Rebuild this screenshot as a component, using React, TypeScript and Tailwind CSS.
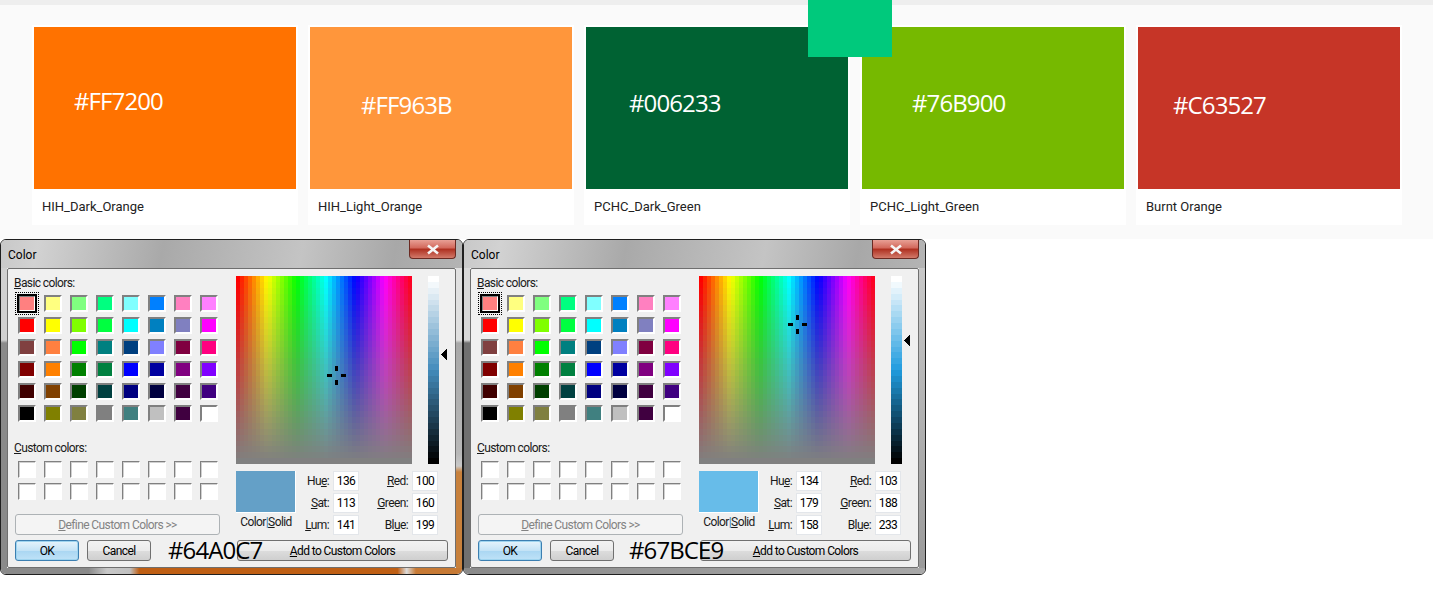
const colors = [
  { hex: '#FF7200', name: 'HIH_Dark_Orange', bg: 'bg-[#FF7200]', pad: 'pl-[40px] pt-[58px]' },
  { hex: '#FF963B', name: 'HIH_Light_Orange', bg: 'bg-[#FF963B]', pad: 'pl-[51px] pt-[62px]' },
  { hex: '#006233', name: 'PCHC_Dark_Green', bg: 'bg-[#006233]', pad: 'pl-[43px] pt-[60px]' },
  { hex: '#76B900', name: 'PCHC_Light_Green', bg: 'bg-[#76B900]', pad: 'pl-[50px] pt-[60px]' },
  { hex: '#C63527', name: 'Burnt Orange', bg: 'bg-[#C63527]', pad: 'pl-[35px] pt-[62px]' },
];

const basicColors = [
  '#FF8080', '#FFFF80', '#80FF80', '#00FF80', '#80FFFF', '#0080FF', '#FF80C0', '#FF80FF',
  '#FF0000', '#FFFF00', '#80FF00', '#00FF40', '#00FFFF', '#0080C0', '#8080C0', '#FF00FF',
  '#804040', '#FF8040', '#00FF00', '#008080', '#004080', '#8080FF', '#800040', '#FF0080',
  '#800000', '#FF8000', '#008000', '#008040', '#0000FF', '#0000A0', '#800080', '#8000FF',
  '#400000', '#804000', '#004000', '#004040', '#000080', '#000040', '#400040', '#400080',
  '#000000', '#808000', '#808040', '#808080', '#408080', '#C0C0C0', '#400040', '#FFFFFF',
];

const btn = 'h-[21px] rounded-[3px] border flex items-center justify-center text-black';
const btnGrey = 'border-[#707070] bg-[linear-gradient(#f2f2f2,#ebebeb_50%,#dddddd_50%,#cfcfcf)]';

function Spectrum({ hue, sat }: { hue: number; sat: number }) {
  const cols = Array.from({ length: 44 }, (_, i) => i);
  const rows = Array.from({ length: 32 }, (_, i) => i);
  const cx = Math.round((hue / 240) * 176);
  const cy = Math.round((1 - sat / 240) * 188);
  return (
    <svg width="176" height="188" viewBox="0 0 176 188" shapeRendering="crispEdges" className="block">
      {cols.map((c) =>
        rows.map((r) => (
          <rect
            key={`${c}-${r}`}
            x={c * 4}
            y={r * 5.875}
            width="4"
            height="6"
            fill={`hsl(${(c / 44) * 360} ${100 - (r / 31) * 100}% 50%)`}
          />
        )),
      )}
      <rect x={cx - 1} y={cy - 9} width="3" height="5" fill="#000" />
      <rect x={cx - 1} y={cy + 5} width="3" height="5" fill="#000" />
      <rect x={cx - 9} y={cy - 1} width="5" height="3" fill="#000" />
      <rect x={cx + 5} y={cy - 1} width="5" height="3" fill="#000" />
    </svg>
  );
}

function LumBar({ hue, sat, lum }: { hue: number; sat: number; lum: number }) {
  const rows = Array.from({ length: 32 }, (_, i) => i);
  return (
    <div className="relative w-[20px] h-[188px]">
      <svg width="11" height="188" viewBox="0 0 11 188" shapeRendering="crispEdges" className="block">
        {rows.map((r) => (
          <rect
            key={r}
            x="0"
            y={r * 5.875}
            width="11"
            height="6"
            fill={`hsl(${(hue / 240) * 360} ${(sat / 240) * 100}% ${100 - (r / 31) * 100}%)`}
          />
        ))}
      </svg>
      <svg
        width="7"
        height="11"
        viewBox="0 0 7 11"
        shapeRendering="crispEdges"
        className="absolute left-[13px]"
        style={{ top: Math.round((1 - lum / 240) * 188) - 5 }}
      >
        <path d="M0 5.5 6 0v11z" fill="#000" />
      </svg>
    </div>
  );
}

function ValueRow({ label, value }: { label: React.ReactNode; value: number }) {
  return (
    <div className="flex items-center h-[20px] justify-end">
      <span className="mr-[4px] whitespace-nowrap">{label}</span>
      <span className="w-[26px] h-[20px] bg-white border border-[#e3e6ea] flex items-center justify-center text-black">
        {value}
      </span>
    </div>
  );
}

type DialogProps = {
  hex: string;
  hexClass: string;
  hue: number;
  sat: number;
  lum: number;
  red: number;
  green: number;
  blue: number;
  swatch: string;
  title: string;
  left: string;
  right: string;
  bottom: string;
};

function ColorDialog(p: DialogProps) {
  return (
    <div className="relative w-[463px] h-[336px] flex flex-col border border-[#1f1f1f] rounded-[6px] overflow-hidden text-[12px] leading-4 text-[#1a1a1a] font-['Roboto',sans-serif] tracking-[-0.6px]">
      <div className={`h-[28px] shrink-0 flex justify-between pl-[7px] pr-[6px] ${p.title}`}>
        <span className="pt-[7px] text-black tracking-normal">Color</span>
        <div className="w-[47px] h-[19px] rounded-b-[4px] border border-t-0 border-[#6b2a22] bg-[linear-gradient(#e8a095,#d2675a_45%,#ae2f1f_50%,#d27a6a)] flex items-center justify-center">
          <svg width="14" height="11" viewBox="0 0 14 11">
            <path d="M2 1.5 12 9.5M12 1.5 2 9.5" stroke="#f5f5f5" strokeWidth="2.6" />
          </svg>
        </div>
      </div>
      <div className="flex flex-1 min-h-0">
        <div className={`w-[6px] ${p.left}`} />
        <div className="w-[449px] border border-[#6f6f6f] rounded-[2px] bg-[#f0f0f0] pl-[6px] pt-[6px] flex flex-col">
          <div className="flex">
            <div className="w-[206px] flex flex-col">
              <span>
                <u>B</u>asic colors:
              </span>
              <div className="grid grid-cols-[repeat(8,18px)] gap-x-[8px] gap-y-[5px] pl-[4px] mt-[4px]">
                {basicColors.map((c, i) => (
                  <div
                    key={i}
                    className="relative w-[18px] h-[17px] border-2 border-t-[#808080] border-l-[#808080] border-r-white border-b-white"
                    style={{ backgroundColor: c }}
                  >
                    {i === 0 && (
                      <div className="absolute -inset-x-[5px] -inset-y-[5px] border border-dotted border-black p-px">
                        <div className="w-full h-full border-2 border-black" />
                      </div>
                    )}
                  </div>
                ))}
              </div>
              <span className="mt-[18px]">
                <u>C</u>ustom colors:
              </span>
              <div className="grid grid-cols-[repeat(8,18px)] gap-x-[8px] gap-y-[5px] pl-[4px] mt-[5px]">
                {Array.from({ length: 16 }, (_, i) => (
                  <div
                    key={i}
                    className="w-[18px] h-[17px] bg-white border border-t-[#808080] border-l-[#808080] border-r-white border-b-white shadow-[inset_1px_1px_0_#d0d0d0]"
                  />
                ))}
              </div>
              <div className={`${btn} mt-[14px] ml-px w-[205px] border-[#adb2b5] bg-[#f4f4f4] !text-[#838383]`}>
                <span>
                  <u>D</u>efine Custom Colors &gt;&gt;
                </span>
              </div>
            </div>
            <div className="ml-[16px] mt-px flex flex-col">
              <div className="flex">
                <Spectrum hue={p.hue} sat={p.sat} />
                <div className="ml-[16px]">
                  <LumBar hue={p.hue} sat={p.sat} lum={p.lum} />
                </div>
              </div>
              <div className="flex mt-[7px]">
                <div className="w-[60px] flex flex-col items-center">
                  <div className="w-[60px] h-[42px] border-r border-b border-white" style={{ backgroundColor: p.swatch }} />
                  <span className="mt-[1px]">
                    Color<span className="text-[#3a7fb5]">|</span>
                    <u>S</u>olid
                  </span>
                </div>
                <div className="w-[63px] flex flex-col gap-[2px]">
                  <ValueRow label={<>Hu<u>e</u>:</>} value={p.hue} />
                  <ValueRow label={<><u>S</u>at:</>} value={p.sat} />
                  <ValueRow label={<><u>L</u>um:</>} value={p.lum} />
                </div>
                <div className="w-[79px] flex flex-col gap-[2px]">
                  <ValueRow label={<><u>R</u>ed:</>} value={p.red} />
                  <ValueRow label={<><u>G</u>reen:</>} value={p.green} />
                  <ValueRow label={<>Bl<u>u</u>e:</>} value={p.blue} />
                </div>
              </div>
            </div>
          </div>
          <div className="flex mt-[5px] ml-px">
            <div className={`${btn} w-[64px] border-[#3c7fb1] bg-[linear-gradient(#e6f4fc,#c4e3f6_50%,#a9d6f2_50%,#bfe2f7)] shadow-[inset_0_0_0_1px_#9fd4ef]`}>OK</div>
            <div className={`${btn} ${btnGrey} w-[64px] ml-[8px]`}>Cancel</div>
            <div className={`${btn} ${btnGrey} w-[211px] ml-[86px]`}>
              <span>
                <u>A</u>dd to Custom Colors
              </span>
            </div>
          </div>
        </div>
        <div className={`w-[6px] ${p.right}`} />
      </div>
      <div className={`h-[6px] shrink-0 ${p.bottom}`} />
      <span className={`absolute top-[294px] text-[24px] leading-8 tracking-[-0.9px] text-black font-['Open_Sans',sans-serif] ${p.hexClass}`}>{p.hex}</span>
    </div>
  );
}

export default function App() {
  return (
    <div className="relative min-h-[600px] bg-white font-['Open_Sans',sans-serif]">
      <div className="h-[5px] bg-[#eeeeee]" />
      <div className="h-[234px] bg-[#fafafa] pt-[20px] pl-[32px] flex gap-[10px]">
        {colors.map((c) => (
          <div key={c.name} className="w-[266px] h-[200px] bg-white px-[2px] pt-[2px]">
            <div className={`h-[162px] ${c.bg} ${c.pad} text-white text-[24px] leading-8 tracking-[-0.9px]`}>{c.hex}</div>
            <div className="pl-[8px] pt-[10px] text-[13px] leading-4 text-[#222] font-['Roboto',sans-serif]">{c.name}</div>
          </div>
        ))}
      </div>
      <div className="absolute top-0 left-[808px] w-[84px] h-[57px] bg-[#00C97C]" />
      <div className="flex">
        <ColorDialog
          hex="#64A0C7"
          hexClass="left-[167px]"
          hue={136}
          sat={113}
          lum={141}
          red={100}
          green={160}
          blue={199}
          swatch="#64A0C7"
          title="bg-[linear-gradient(100deg,#c8c8c8,#d2d2d2_8%,#a9a9a9_35%,#c4c4c4_65%,#a8a8a8_85%,#b4b4b4)]"
          left="bg-[linear-gradient(#d0d0d0_24%,#8a8a8a_25%)]"
          right="bg-[linear-gradient(#e0e0e0_24%,#a8a8a8_25%,#b8b8b8_62%,#c8c8c8_66%,#c8813c_68%)]"
          bottom="bg-[linear-gradient(90deg,#8a8a8a,#8a8a8a_19%,#c8c8c8_23%,#c0c0c0_28%,#bf5f14_30%,#bf5f14_86%,#dcdcdc_88%,#c77a35_90%)]"
        />
        <ColorDialog
          hex="#67BCE9"
          hexClass="left-[165px]"
          hue={134}
          sat={179}
          lum={158}
          red={103}
          green={188}
          blue={233}
          swatch="#67BCE9"
          title="bg-[linear-gradient(100deg,#c8c8c8,#d2d2d2_8%,#a9a9a9_35%,#c4c4c4_65%,#a8a8a8_85%,#b4b4b4)]"
          left="bg-[linear-gradient(#d8d8d8_24%,#707070_25%)]"
          right="bg-[linear-gradient(#c8c8c8,#9a9a9a)]"
          bottom="bg-[linear-gradient(90deg,#8a8a8a,#a8a8a8)]"
        />
      </div>
    </div>
  );
}
